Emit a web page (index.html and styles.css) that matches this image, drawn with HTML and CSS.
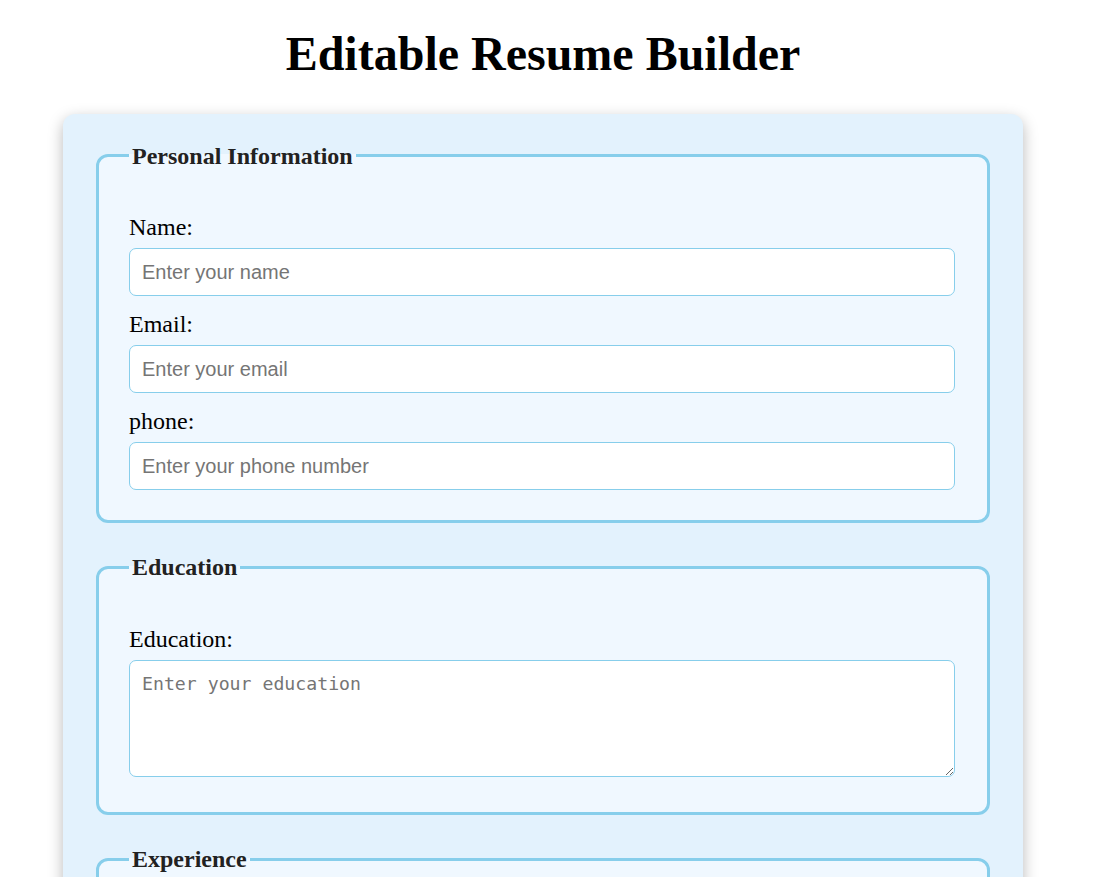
FILE: index.html
```html
<!DOCTYPE html>
<html lang="en">
<head>
<meta charset="UTF-8">
<title>Editable Resume Builder</title>
<link rel="stylesheet" href="styles.css">
</head>
<body>
<h1 class="title">Editable Resume Builder</h1>
<div class="container">
  <form class="resume-form">
    <fieldset class="section">
      <legend class="section-title">Personal Information</legend>
      <div class="group">
        <label class="field-label" for="name">Name:</label>
        <input class="field-input" type="text" id="name" placeholder="Enter your name">
      </div>
      <div class="group">
        <label class="field-label" for="email">Email:</label>
        <input class="field-input" type="email" id="email" placeholder="Enter your email">
      </div>
      <div class="group">
        <label class="field-label" for="phone">phone:</label>
        <input class="field-input" type="tel" id="phone" placeholder="Enter your phone number">
      </div>
    </fieldset>
    <fieldset class="section">
      <legend class="section-title">Education</legend>
      <div class="group">
        <label class="field-label" for="education">Education:</label>
        <textarea class="field-area" id="education" placeholder="Enter your education"></textarea>
      </div>
    </fieldset>
    <fieldset class="section">
      <legend class="section-title">Experience</legend>
      <div class="group">
        <label class="field-label" for="experience">Experience:</label>
        <textarea class="field-area" id="experience" placeholder="Enter your experience"></textarea>
      </div>
    </fieldset>
    <fieldset class="section">
      <legend class="section-title">Skills</legend>
      <div class="group">
        <label class="field-label" for="skills">Skills:</label>
        <textarea class="field-area" id="skills" placeholder="Enter your skills"></textarea>
      </div>
    </fieldset>
  </form>
</div>
</body>
</html>
```
FILE: styles.css
```css
html, body {
  background: #ffffff;
}

body {
  margin: 0;
  padding: 0 9px 0 0;
  font-family: "Liberation Serif", "Times New Roman", serif;
  color: #000;
}

.title {
  margin: 25.5px 0 33.7px;
  font-size: 48px;
  font-weight: bold;
  line-height: normal;
  text-align: center;
}

.container {
  box-sizing: border-box;
  width: 960px;
  margin: 0 auto 30px;
  padding: 28.5px 30px 30px;
  background: #e3f2fd;
  border-radius: 12px;
  box-shadow: 0 5px 15px rgba(0, 0, 0, 0.28);
}

.resume-form {
  margin: 0;
}

.section {
  margin: 0 3px 31px;
  padding: 30px;
  border: 3px solid #87ceeb;
  border-radius: 12px;
  background: #f0f8ff;
  min-width: 0;
}

.section-title {
  padding: 0 3px;
  font-family: "Liberation Serif", "Times New Roman", serif;
  font-size: 24px;
  line-height: 26.5px;
  font-weight: bold;
  color: #222;
}

.group {
  margin-top: 15px;
}

.field-label {
  display: block;
  margin-bottom: 7.5px;
  font-size: 24px;
  line-height: 26.5px;
}

.field-input {
  display: block;
  box-sizing: border-box;
  width: calc(100% - 2px);
  height: 48px;
  margin: 0;
  padding: 0 12px;
  border: 1px solid #87ceeb;
  border-radius: 7px;
  background: #fff;
  font-family: "Liberation Sans", Arial, sans-serif;
  font-size: 20px;
  color: #000;
}

.field-input::placeholder,
.field-area::placeholder {
  color: #757575;
}

.field-area {
  display: block;
  box-sizing: border-box;
  width: calc(100% - 2px);
  height: 117.4px;
  margin: 0 0 5.2px;
  padding: 12px;
  border: 1px solid #87ceeb;
  border-radius: 7px;
  background: #fff;
  font-family: "DejaVu Sans Mono", monospace;
  font-size: 18.2px;
  color: #000;
}
```
